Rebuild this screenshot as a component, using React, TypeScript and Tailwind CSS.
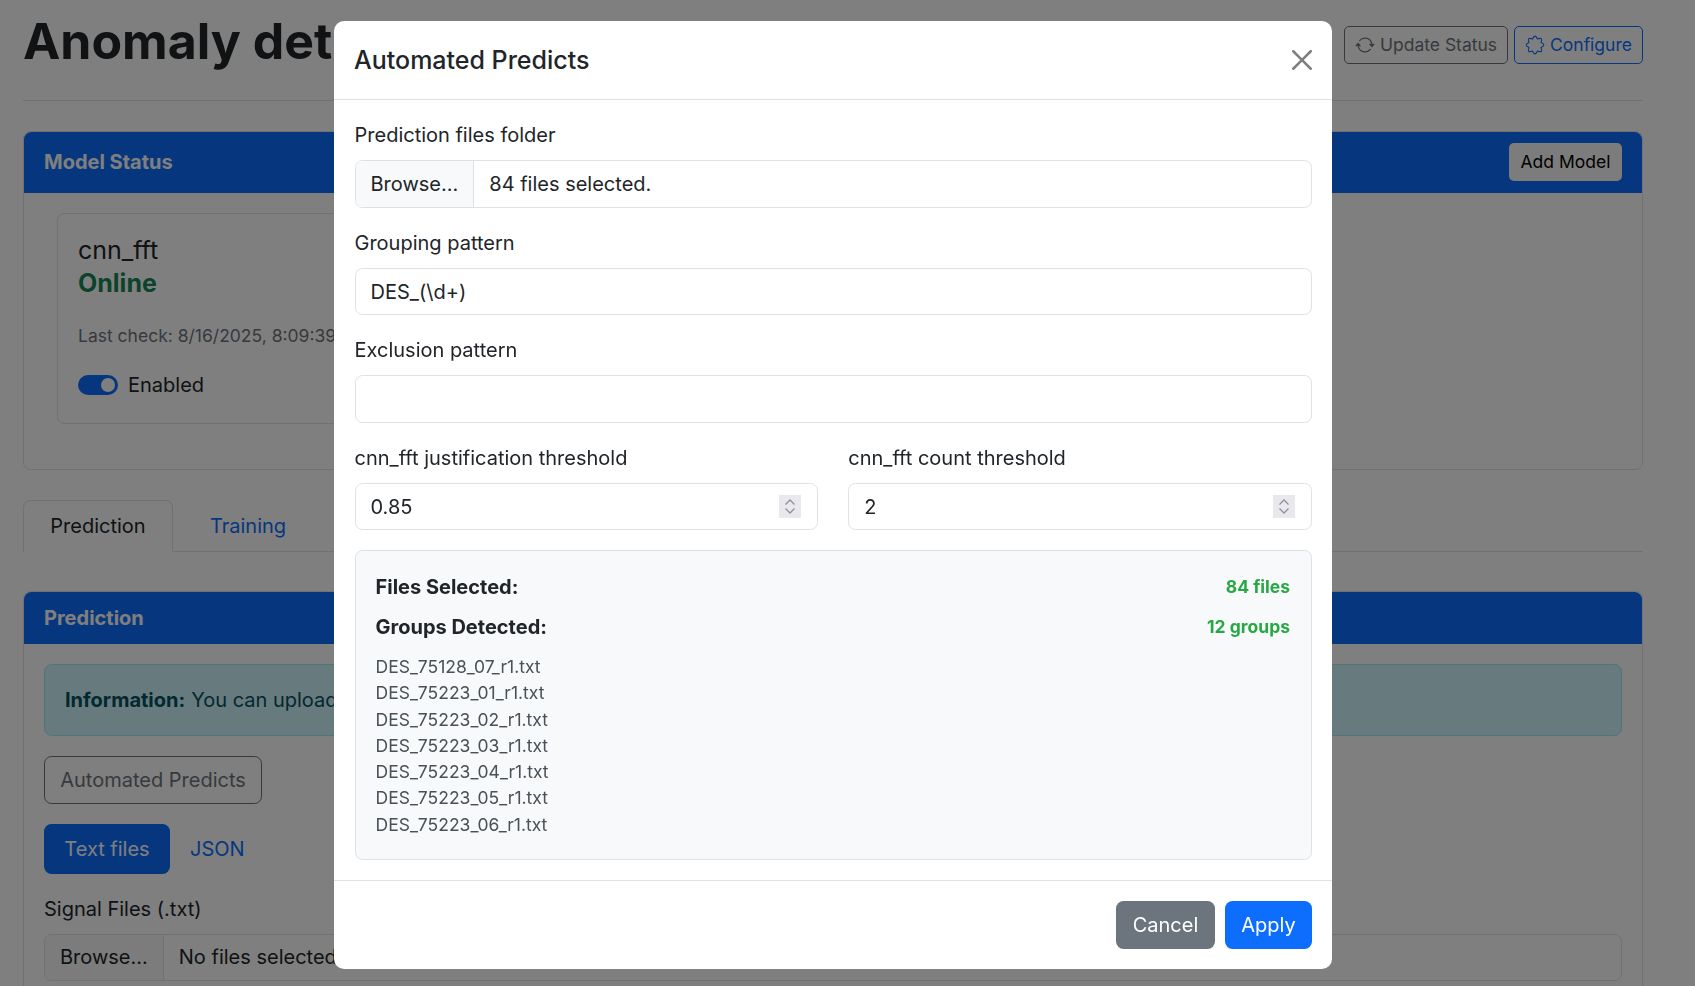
import React from 'react';
import { BsArrowRepeat } from 'react-icons/bs';

const files = [
  'DES_75128_07_r1.txt',
  'DES_75223_01_r1.txt',
  'DES_75223_02_r1.txt',
  'DES_75223_03_r1.txt',
  'DES_75223_04_r1.txt',
  'DES_75223_05_r1.txt',
  'DES_75223_06_r1.txt',
];

const inputCls =
  'block w-full h-[47.5px] rounded-[7.5px] border border-[#dee2e6] bg-white px-[15px] pt-[1px] text-[20px] text-[#212529] outline-none';

const Label = ({ children }: { children: React.ReactNode }) => (
  <div className="mb-[10px] h-[30px] text-[20px] leading-[30px] text-[#212529]">{children}</div>
);

const NumberField = ({ label, value }: { label: string; value: string }) => (
  <div className="flex-1">
    <Label>{label}</Label>
    <div className="relative">
      <input readOnly value={value} className={inputCls} />
      <div className="absolute right-[17px] top-[12px] flex h-[23px] w-[22px] items-center justify-center bg-[#e9e9ed]">
        <svg width="10" height="23" viewBox="0 0 10 23" fill="none" stroke="#8f8f9d" strokeWidth="1.3">
          <path d="M.5 9.5 5 5 9.5 9.5" />
          <path d="M.5 13.5 5 18 9.5 13.5" />
        </svg>
      </div>
    </div>
  </div>
);

const FileField = ({ text }: { text: string }) => (
  <div className="flex h-[47.5px] items-center overflow-hidden rounded-[7.5px] border border-[#dee2e6] bg-white text-[20px] text-[#212529]">
    <div className="flex h-full items-center border-r border-[#dee2e6] bg-[#f8f9fa] px-[15px]">Browse...</div>
    <div className="whitespace-nowrap px-[15px]">{text}</div>
  </div>
);

const Modal = () => (
  <div className="fixed inset-0 bg-black/50">
    <div className="absolute left-[334px] top-[21px] flex h-[947.5px] w-[998px] flex-col rounded-[10px] bg-white">
      <div className="flex h-[79px] items-center justify-between border-b border-[#dee2e6] pl-[20px] pr-[20px]">
        <div className="text-[25px] font-medium leading-[30px] text-[#212529]">Automated Predicts</div>
        <svg width="20" height="20" viewBox="0 0 16 16" fill="#000" opacity="0.5">
          <path d="M.293.293a1 1 0 0 1 1.414 0L8 6.586 14.293.293a1 1 0 1 1 1.414 1.414L9.414 8l6.293 6.293a1 1 0 0 1-1.414 1.414L8 9.414l-6.293 6.293a1 1 0 0 1-1.414-1.414L6.586 8 .293 1.707a1 1 0 0 1 0-1.414z" />
        </svg>
      </div>

      <div className="flex-1 py-[20px] pl-[20.5px] pr-[20px]">
        <Label>Prediction files folder</Label>
        <div className="mb-[20px]">
          <FileField text="84 files selected." />
        </div>
        <Label>Grouping pattern</Label>
        <input readOnly value="DES_(\d+)" className={`${inputCls} mb-[20px]`} />
        <Label>Exclusion pattern</Label>
        <input readOnly value="" className={`${inputCls} mb-[20px]`} />
        <div className="mb-[20px] flex gap-[30px]">
          <NumberField label="cnn_fft justification threshold" value="0.85" />
          <NumberField label="cnn_fft count threshold" value="2" />
        </div>

        <div className="h-[310px] rounded-[7.5px] border border-[#dee2e6] bg-[#f8f9fa] pb-[20px] pl-[20px] pr-[21px] pt-[21px]">
          <div className="flex h-[30px] items-center justify-between">
            <span className="text-[20px] font-bold text-[#212529]">Files Selected:</span>
            <span className="text-[17.5px] font-bold text-[#28a745]">84 files</span>
          </div>
          <div className="mt-[10px] flex h-[30px] items-center justify-between">
            <span className="text-[20px] font-bold text-[#212529]">Groups Detected:</span>
            <span className="text-[17.5px] font-bold text-[#28a745]">12 groups</span>
          </div>
          <div className="mt-[12px] text-[17.5px] leading-[26.25px] text-[#495057]">
            {files.map((f) => (
              <div key={f}>{f}</div>
            ))}
          </div>
        </div>
      </div>

      <div className="flex h-[88.5px] items-center justify-end gap-[10px] border-t border-[#dee2e6] px-[20px]">
        <button className="h-[48px] w-[99px] rounded-[7.5px] bg-[#6c757d] pt-[1px] text-[20px] text-white">Cancel</button>
        <button className="h-[48px] w-[87px] rounded-[7.5px] bg-[#0d6efd] pt-[1px] text-[20px] text-white">Apply</button>
      </div>
    </div>
  </div>
);

export default function App() {
  return (
    <div className="h-[986px] overflow-hidden bg-white pl-[23px] pr-[52px] font-['Inter',sans-serif] text-[#212529]">
      <div className="flex h-[101px] items-start justify-between border-b border-[#dee2e6]">
        <h1 className="mt-[11px] text-[50px] font-bold leading-[60px]">Anomaly detection</h1>
        <div className="mt-[26px] flex gap-[6px]">
          <button className="flex h-[38px] w-[164px] items-center justify-center gap-[5px] rounded-[5px] border border-[#6c757d] text-[17.5px] text-[#6c757d]">
            <BsArrowRepeat size={20} />
            Update Status
          </button>
          <button className="flex h-[38px] w-[129px] items-center justify-center gap-[5px] rounded-[5px] border border-[#0d6efd] text-[17.5px] text-[#0d6efd]">
            <svg width="20" height="20" viewBox="0 0 16 16" fill="none" stroke="currentColor" strokeWidth="0.9" strokeLinejoin="round">
              <path d="M6 3.2Q8-1.4 10 3.2 14.65 1.35 12.8 6 17.4 8 12.8 10 14.65 14.65 10 12.8 8 17.4 6 12.8 1.35 14.65 3.2 10-1.4 8 3.2 6 1.35 1.35 6 3.2Z" />
            </svg>
            Configure
          </button>
        </div>
      </div>

      <div className="mt-[30px] h-[339px] rounded-[7.5px] border border-[#dee2e6]">
        <div className="flex h-[61px] items-center justify-between rounded-t-[7.5px] bg-[#0d6efd] px-[20px] pb-[2px]">
          <span className="text-[20px] font-bold text-white">Model Status</span>
          <button className="h-[38px] w-[113px] rounded-[5px] bg-[#f8f9fa] pt-[1px] text-[17.5px] text-black">Add Model</button>
        </div>
        <div className="ml-[33px] mt-[20px] h-[211px] w-[500px] rounded-[7.5px] border border-[#dee2e6] px-[20px] pt-[19px]">
          <div className="text-[25px] leading-[35px]">cnn_fft</div>
          <div className="text-[25px] font-bold leading-[31px] text-[#198754]">Online</div>
          <div className="mt-[24px] whitespace-nowrap text-[17.5px] leading-[26px] text-[#6c757d]">Last check: 8/16/2025, 8:09:39 PM</div>
          <div className="mt-[21px] flex items-center gap-[10px]">
            <div className="flex h-[20px] w-[40px] items-center justify-end rounded-full bg-[#0d6efd] px-[3px]">
              <div className="h-[14px] w-[14px] rounded-full bg-white" />
            </div>
            <span className="text-[20px] leading-[30px]">Enabled</span>
          </div>
        </div>
      </div>

      <div className="mt-[30px] flex h-[52px] border-b border-[#dee2e6]">
        <div className="h-[52px] w-[150px] rounded-t-[7.5px] border border-[#dee2e6] border-b-white bg-white text-center text-[20px] leading-[50px]">Prediction</div>
        <div className="w-[150px] pt-[1px] text-center text-[20px] leading-[50px] text-[#0d6efd]">Training</div>
      </div>

      <div className="mt-[39px] rounded-[7.5px] border border-[#dee2e6]">
        <div className="flex h-[52px] items-center rounded-t-[7.5px] bg-[#0d6efd] px-[20px] text-[20px] font-bold text-white">Prediction</div>
        <div className="p-[20px]">
          <div className="flex h-[72px] items-center rounded-[7.5px] border border-[#9eeaf9] bg-[#cff4fc] px-[20px] text-[20px] text-[#055160]">
            <b className="mr-[6px] font-bold">Information:</b> You can upload
          </div>
          <button className="mt-[20px] block h-[47.5px] w-[218px] rounded-[7.5px] border border-[#6c757d] text-[20px] text-[#6c757d]">Automated Predicts</button>
          <div className="mt-[20px] flex h-[50px] items-center text-[20px]">
            <div className="flex h-full w-[126px] items-center justify-center rounded-[7.5px] bg-[#0d6efd] text-white">Text files</div>
            <div className="ml-[20px] text-[#0d6efd]">JSON</div>
          </div>
          <div className="mt-[20px]"><Label>Signal Files (.txt)</Label></div>
          <FileField text="No files selected." />
        </div>
      </div>

      <Modal />
    </div>
  );
}
